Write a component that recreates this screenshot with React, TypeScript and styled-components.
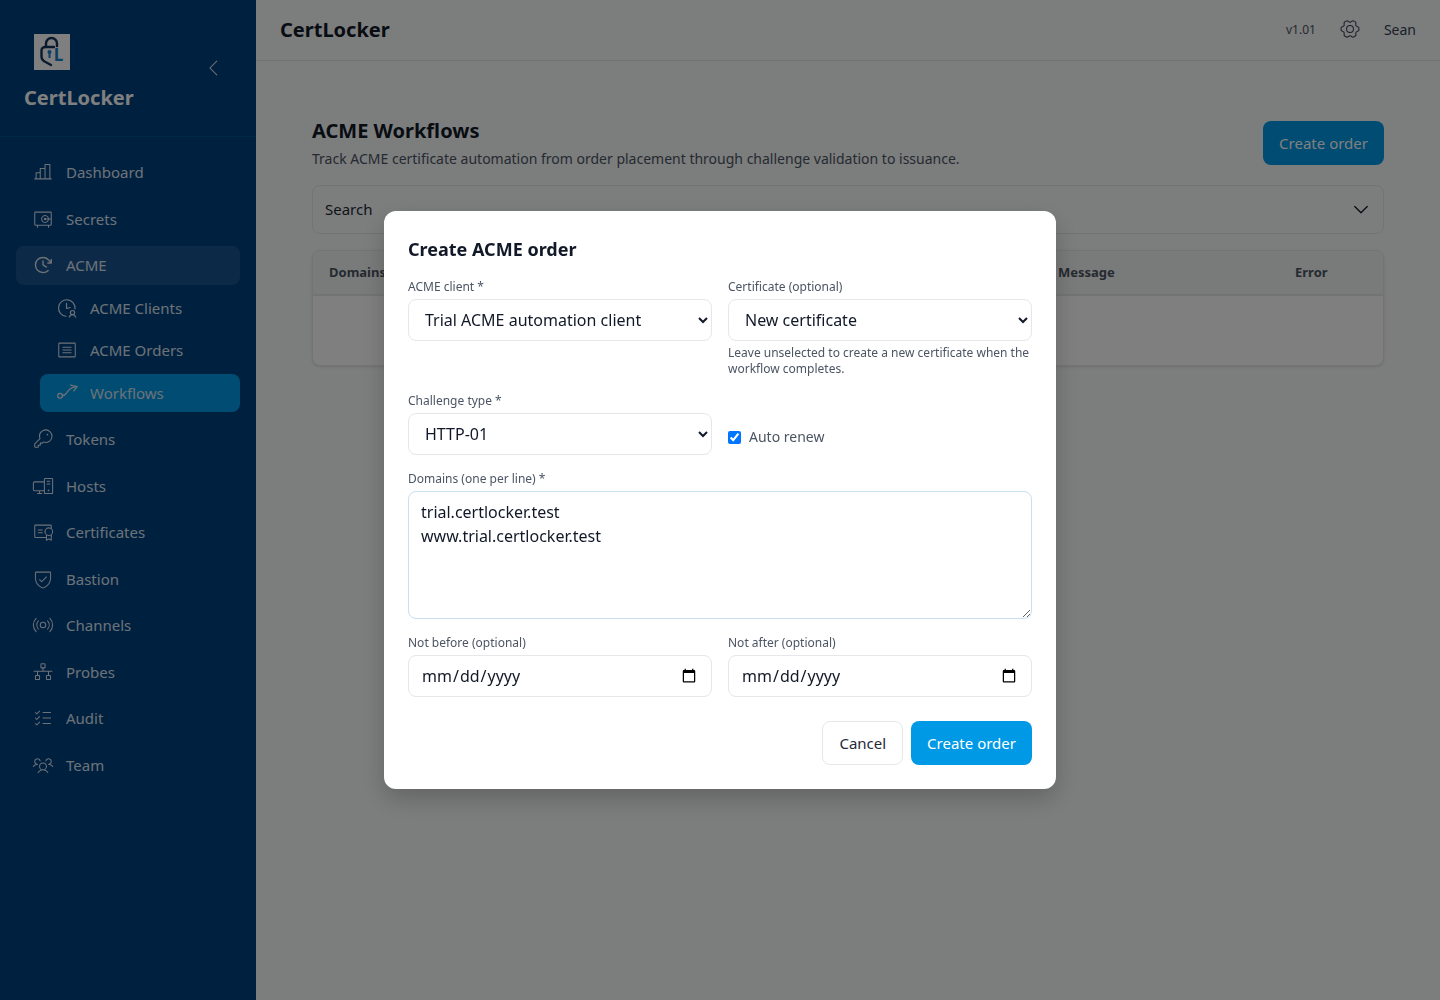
import React from 'react';
import styled, { createGlobalStyle } from 'styled-components';
import {
  PiArticleLight,
  PiBroadcastLight,
  PiCaretDown,
  PiCaretLeftLight,
  PiCertificateLight,
  PiChartBarLight,
  PiClockClockwise,
  PiDesktopTowerLight,
  PiGearSixLight,
  PiKeyLight,
  PiListChecksLight,
  PiNetworkLight,
  PiShieldCheckLight,
  PiUsersThreeLight,
  PiVaultLight,
} from 'react-icons/pi';

const GlobalStyle = createGlobalStyle`
  * { box-sizing: border-box; }
  html, body { margin: 0; height: 100%; }
  body {
    font-family: "Noto Sans", "Liberation Sans", sans-serif;
    color: #111827;
    background: #f9fafb;
  }
`;

const Shell = styled.div`
  display: flex;
  height: 100vh;
  overflow: hidden;
`;

const Sidebar = styled.aside`
  width: 256px;
  flex-shrink: 0;
  background: #004080;
  color: #dbe4ee;
`;

const Brand = styled.div`
  position: relative;
  height: 137px;
  padding: 34px 24px 0;
  border-bottom: 1px solid #00528f;
`;

const LogoBox = styled.div`
  width: 36px;
  height: 36px;
  margin-left: 10px;
  background: #fff;
`;

const BrandName = styled.div`
  margin-top: 14px;
  font-size: 20px;
  line-height: 28px;
  font-weight: 700;
  color: #fff;
`;

const Collapse = styled.button`
  position: absolute;
  top: 57px;
  left: 203px;
  width: 22px;
  height: 22px;
  padding: 0;
  display: flex;
  border: 0;
  background: none;
  color: #dbe4ee;
  font-size: 22px;
`;

const Nav = styled.nav`
  display: flex;
  flex-direction: column;
  padding: 16px;
`;

const NavItem = styled.a<{ $sub?: boolean; $active?: boolean; $open?: boolean }>`
  display: flex;
  align-items: center;
  gap: 12px;
  height: 38.5px;
  margin-left: ${(p) => (p.$sub ? '24px' : '0')};
  margin-top: ${(p) => (p.$sub ? '4px' : '0')};
  margin-bottom: ${(p) => (p.$sub ? '0' : '8px')};
  padding: 8px 16px;
  border-radius: 8px;
  font-size: 15px;
  line-height: 22.5px;
  color: #dbe4ee;
  background: ${(p) => (p.$active ? '#0099e6' : p.$open ? '#1a5390' : 'transparent')};

  svg {
    flex-shrink: 0;
    width: 22px;
    height: 22px;
  }
`;

const SubGroup = styled.div`
  display: flex;
  flex-direction: column;
  margin-top: -8px;
  margin-bottom: 8px;
`;

const Main = styled.div`
  flex: 1;
  min-width: 0;
  display: flex;
  flex-direction: column;
`;

const TopBar = styled.header`
  height: 61px;
  display: flex;
  align-items: center;
  justify-content: space-between;
  padding: 0 24px 2px;
  background: #f8fafa;
  border-bottom: 1px solid #e5e7eb;
`;

const TopTitle = styled.div`
  font-size: 20px;
  font-weight: 700;
  color: #111827;
`;

const TopRight = styled.div`
  display: flex;
  align-items: center;
  gap: 24px;
`;

const Version = styled.span`
  font-size: 12px;
  color: #4b5563;
`;

const Gear = styled.span`
  display: flex;
  font-size: 22px;
  margin: 0 -1px;
  color: #374151;
`;

const UserName = styled.span`
  font-size: 14px;
  color: #374151;
`;

const Content = styled.main`
  padding: 56px 56px 0;
`;

const PageHeader = styled.div`
  display: flex;
  align-items: center;
  justify-content: space-between;
  margin-bottom: 16px;
`;

const PageTitle = styled.h1`
  margin: 0 0 4px;
  font-size: 20px;
  line-height: 28px;
  font-weight: 700;
  color: #111827;
`;

const PageSub = styled.p`
  margin: 0;
  font-size: 14px;
  line-height: 20px;
  color: #4b5563;
`;

const Button = styled.button<{ $ghost?: boolean }>`
  height: 44px;
  padding: 0 16px;
  border-radius: 8px;
  border: ${(p) => (p.$ghost ? '1px solid #e5e7eb' : '0')};
  background: ${(p) => (p.$ghost ? '#fff' : '#0099e6')};
  color: ${(p) => (p.$ghost ? '#1f2937' : '#fff')};
  font-family: inherit;
  font-size: 15px;
`;

const SearchBar = styled.div`
  height: 49px;
  display: flex;
  align-items: center;
  justify-content: space-between;
  padding: 0 12px 2px;
  margin-bottom: 16px;
  border: 1px solid #e5e7eb;
  border-radius: 8px;
  font-size: 15px;
  color: #1f2937;

  svg {
    width: 20px;
    height: 20px;
    color: #111827;
  }
`;

const TableCard = styled.div`
  height: 116px;
  border: 1px solid #e5e7eb;
  border-radius: 8px;
  background: #fff;
  overflow: hidden;
  box-shadow: 0 1px 3px rgba(0, 0, 0, 0.1);
`;

const TableHead = styled.div`
  height: 45px;
  display: grid;
  grid-template-columns: 729px 237px 1fr;
  align-items: center;
  padding: 0 16px 2px;
  background: #f3f5f5;
  border-bottom: 2px solid #e5e7eb;
  font-size: 13px;
  font-weight: 700;
  color: #4b5563;
`;

const Overlay = styled.div`
  position: fixed;
  inset: 0;
  display: flex;
  align-items: center;
  justify-content: center;
  background: rgba(0, 0, 0, 0.5);
`;

const Modal = styled.form`
  width: 672px;
  height: 578px;
  padding: 24px;
  border-radius: 12px;
  background: #fff;
  box-shadow: 0 10px 25px rgba(0, 0, 0, 0.2);
`;

const ModalTitle = styled.h2`
  margin: 0 0 16px;
  font-size: 18px;
  line-height: 28px;
  font-weight: 700;
  color: #111827;
`;

const FormGrid = styled.div`
  display: grid;
  grid-template-columns: 304px 304px;
  column-gap: 16px;
`;

const Field = styled.div<{ $wide?: boolean; $bottom: number }>`
  grid-column: ${(p) => (p.$wide ? '1 / -1' : 'auto')};
  margin-bottom: ${(p) => p.$bottom}px;
`;

const Label = styled.label`
  display: block;
  height: 16px;
  margin-bottom: 4px;
  font-size: 12px;
  line-height: 16px;
  color: #4b5563;
`;

const Select = styled.select`
  display: block;
  width: 100%;
  height: 42px;
  padding: 8px 12px;
  border: 1px solid #e5e7eb;
  border-radius: 8px;
  background: #fff;
  font-family: inherit;
  font-size: 16px;
  color: #111827;
`;

const Help = styled.p`
  margin: 4px 0 0;
  font-size: 12px;
  line-height: 16px;
  color: #4b5563;
`;

const CheckRow = styled.label`
  display: flex;
  align-items: center;
  gap: 8px;
  height: 42px;
  margin-top: 20px;
  padding-top: 6px;
  font-size: 14px;
  color: #4b5563;

  input {
    width: 13px;
    height: 13px;
    margin: 0;
  }
`;

const CheckText = styled.span`
  padding-bottom: 2px;
`;

const TextArea = styled.textarea`
  display: block;
  width: 100%;
  height: 128px;
  padding: 8px 12px;
  border: 1px solid #c8e0f0;
  border-radius: 8px;
  outline: none;
  font-family: inherit;
  font-size: 16px;
  line-height: 24px;
  color: #111827;
`;

const DateInput = styled.input`
  display: block;
  width: 100%;
  height: 42px;
  padding: 8px 12px;
  border: 1px solid #e5e7eb;
  border-radius: 8px;
  background: #fff;
  font-family: inherit;
  font-size: 16px;
  color: #111827;
`;

const Actions = styled.div`
  display: flex;
  justify-content: flex-end;
  gap: 8px;
  margin-top: 24px;
`;

const Logo = () => (
  <svg width="36" height="36" viewBox="0 0 36 36" fill="none">
    <path
      d="M12 12.500V9.500a5.500 5.500 0 0 1 11 0V12"
      stroke="#12355e"
      strokeWidth="2.400"
      strokeLinecap="round"
    />
    <path
      d="M20 13H11.500C9 13 7.500 14.500 7.500 16.500v6c0 3 2.500 5 5 6l4.500 2.500"
      stroke="#12355e"
      strokeWidth="2.400"
      strokeLinecap="round"
    />
    <circle cx="15.500" cy="18" r="2" fill="#1480c8" />
    <rect x="14.500" y="18" width="2" height="6" fill="#1480c8" />
    <text x="19.800" y="27" fontFamily="Noto Sans" fontSize="17" fontWeight="700" fill="#1480c8">
      L
    </text>
  </svg>
);

const ClockUserIcon = () => (
  <svg viewBox="0 0 24 24" fill="none" stroke="currentColor" strokeWidth="1.3" strokeLinecap="round" strokeLinejoin="round">
    <path d="M11 21a9 9 0 1 1 9.700-8" />
    <path d="M11.500 7v5.500l4-1" />
    <circle cx="18" cy="17" r="2.300" />
    <path d="M14.500 22c.6-1.700 1.900-2.700 3.500-2.700s2.900 1 3.500 2.700" />
  </svg>
);

const PathArrowIcon = () => (
  <svg viewBox="0 0 24 24" fill="none" stroke="currentColor" strokeWidth="1.4" strokeLinecap="round" strokeLinejoin="round">
    <circle cx="4.400" cy="15" r="2.600" />
    <path d="M7 15c3 0 4-2.500 6-5s5-4.500 9.900-4.900" />
    <path d="M16 3.300L22.900 5.100 19.600 9.800" />
  </svg>
);

const navTop = [
  { label: 'Dashboard', icon: <PiChartBarLight /> },
  { label: 'Secrets', icon: <PiVaultLight /> },
];

const navSub = [
  { label: 'ACME Clients', icon: <ClockUserIcon /> },
  { label: 'ACME Orders', icon: <PiArticleLight /> },
  { label: 'Workflows', icon: <PathArrowIcon />, active: true },
];

const navRest = [
  { label: 'Tokens', icon: <PiKeyLight /> },
  { label: 'Hosts', icon: <PiDesktopTowerLight /> },
  { label: 'Certificates', icon: <PiCertificateLight /> },
  { label: 'Bastion', icon: <PiShieldCheckLight /> },
  { label: 'Channels', icon: <PiBroadcastLight /> },
  { label: 'Probes', icon: <PiNetworkLight /> },
  { label: 'Audit', icon: <PiListChecksLight /> },
  { label: 'Team', icon: <PiUsersThreeLight /> },
];

const App = () => (
  <>
    <GlobalStyle />
    <Shell>
      <Sidebar>
        <Brand>
          <LogoBox>
            <Logo />
          </LogoBox>
          <BrandName>CertLocker</BrandName>
          <Collapse type="button" aria-label="Collapse sidebar">
            <PiCaretLeftLight />
          </Collapse>
        </Brand>
        <Nav>
          {navTop.map((item) => (
            <NavItem key={item.label}>
              {item.icon}
              {item.label}
            </NavItem>
          ))}
          <NavItem $open>
            <PiClockClockwise />
            ACME
          </NavItem>
          <SubGroup>
            {navSub.map((item) => (
              <NavItem key={item.label} $sub $active={item.active}>
                {item.icon}
                {item.label}
              </NavItem>
            ))}
          </SubGroup>
          {navRest.map((item) => (
            <NavItem key={item.label}>
              {item.icon}
              {item.label}
            </NavItem>
          ))}
        </Nav>
      </Sidebar>
      <Main>
        <TopBar>
          <TopTitle>CertLocker</TopTitle>
          <TopRight>
            <Version>v1.01</Version>
            <Gear>
              <PiGearSixLight />
            </Gear>
            <UserName>Sean</UserName>
          </TopRight>
        </TopBar>
        <Content>
          <PageHeader>
            <div>
              <PageTitle>ACME Workflows</PageTitle>
              <PageSub>Track ACME certificate automation from order placement through challenge validation to issuance.</PageSub>
            </div>
            <Button type="button">Create order</Button>
          </PageHeader>
          <SearchBar>
            Search
            <PiCaretDown />
          </SearchBar>
          <TableCard>
            <TableHead>
              <span>Domains</span>
              <span>Message</span>
              <span>Error</span>
            </TableHead>
          </TableCard>
        </Content>
      </Main>
    </Shell>
    <Overlay>
      <Modal>
        <ModalTitle>Create ACME order</ModalTitle>
        <FormGrid>
          <Field $bottom={16}>
            <Label>ACME client *</Label>
            <Select defaultValue="trial">
              <option value="trial">Trial ACME automation client</option>
            </Select>
          </Field>
          <Field $bottom={16}>
            <Label>Certificate (optional)</Label>
            <Select defaultValue="new">
              <option value="new">New certificate</option>
            </Select>
            <Help>Leave unselected to create a new certificate when the workflow completes.</Help>
          </Field>
          <Field $bottom={16}>
            <Label>Challenge type *</Label>
            <Select defaultValue="http">
              <option value="http">HTTP-01</option>
            </Select>
          </Field>
          <Field $bottom={16}>
            <CheckRow>
              <input type="checkbox" defaultChecked />
              <CheckText>Auto renew</CheckText>
            </CheckRow>
          </Field>
          <Field $wide $bottom={16}>
            <Label>Domains (one per line) *</Label>
            <TextArea defaultValue={'trial.certlocker.test\nwww.trial.certlocker.test'} />
          </Field>
          <Field $bottom={0}>
            <Label>Not before (optional)</Label>
            <DateInput type="date" />
          </Field>
          <Field $bottom={0}>
            <Label>Not after (optional)</Label>
            <DateInput type="date" />
          </Field>
        </FormGrid>
        <Actions>
          <Button type="button" $ghost>
            Cancel
          </Button>
          <Button type="button">Create order</Button>
        </Actions>
      </Modal>
    </Overlay>
  </>
);

export default App;
